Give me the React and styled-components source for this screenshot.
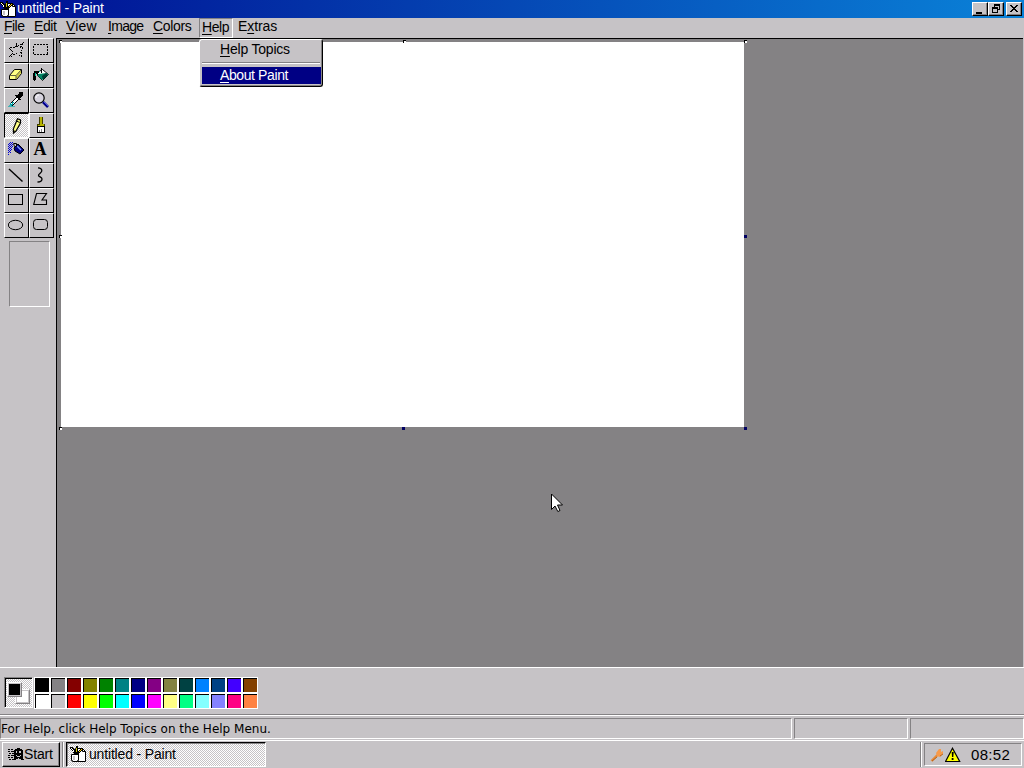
import React from "react";
import styled, { createGlobalStyle, css } from "styled-components";

const GlobalStyle = createGlobalStyle`
  * {
    box-sizing: border-box;
  }
  body {
    margin: 0;
    overflow: hidden;
    background: #c6c3c6;
    color: #000;
    font-family: "Liberation Sans", Arial, sans-serif;
    font-size: 14px;
  }
  svg {
    display: block;
    flex: none;
  }
`;

const dither = css`
  background: repeating-conic-gradient(#fff 0% 25%, #c6c3c6 0% 50%) 0 0 / 2px 2px;
`;

const sunken = css`
  border: 1px solid;
  border-color: #848284 #fff #fff #848284;
`;

const Screen = styled.div`
  position: relative;
  display: flex;
  flex-direction: column;
  width: 1024px;
  height: 768px;
  overflow: hidden;
  cursor: default;
`;

const TitleBar = styled.header`
  display: flex;
  align-items: center;
  height: 18px;
  padding: 0 2px 0 0;
  background: linear-gradient(to right, #000e92, #0a82d8);
  color: #fff;
`;

const Label = styled.span`
  white-space: pre;
  line-height: 16px;
  letter-spacing: ${p => p.spacing || 0}px;
`;

const Title = styled(Label)`
  flex: 1;
  padding: 0 0 2px 1px;
`;

const WindowButton = styled.button`
  display: flex;
  align-items: center;
  justify-content: center;
  width: 16px;
  height: 14px;
  margin: 0 0 0 ${p => p.gap || 0}px;
  padding: 0;
  background: #c6c3c6;
  border: 1px solid;
  border-color: #fff #000 #000 #fff;
  box-shadow: inset -1px -1px #848284;
`;

const MenuBar = styled.nav`
  display: flex;
  height: 20px;
`;

const MenuItem = styled.div`
  position: relative;
  width: ${p => p.width}px;
  height: 20px;
  padding-left: 4px;

  ${p =>
    p.open &&
    css`
      padding: 0 0 0 2px;
      border: 1px solid;
      border-color: #848284 #fff #fff #848284;
      margin-right: 1px;
    `}
`;

const Hot = styled.span`
  text-decoration: underline;
  text-underline-offset: 2px;
  text-decoration-thickness: 1px;
  text-decoration-skip-ink: none;
`;

const Menu = styled.div`
  position: absolute;
  z-index: 3;
  top: 20px;
  left: -1px;
  width: 124px;
  height: 48px;
  padding: 1px;
  background: #c6c3c6;
  border: 1px solid;
  border-color: #fff #000 #000 #fff;
  border-radius: 3px;
  box-shadow: inset -1px -1px #848284;
`;

const MenuRow = styled.div`
  width: 119px;
  height: ${p => (p.active ? 17 : 18)}px;
  padding: 0 0 0 18px;
  background: ${p => (p.active ? "#000084" : "transparent")};
  color: ${p => (p.active ? "#fff" : "#000")};
  margin-left: 1px;
`;

const MenuLine = styled.div`
  height: 2px;
  margin: 3px 1px;
  border-top: 1px solid #848284;
  border-bottom: 1px solid #fff;
`;

const Main = styled.main`
  display: flex;
  height: 629px;
`;

const Side = styled.aside`
  width: 56px;
  padding-left: 4px;
`;

const Tools = styled.div`
  display: grid;
  grid-template-columns: 25px 25px;
  grid-auto-rows: 25px;
`;

const Tool = styled.button`
  display: flex;
  padding: 3px;
  background: #c6c3c6;
  border: 1px solid;
  border-color: #fff #000 #000 #fff;

  ${p =>
    p.pressed &&
    css`
      ${dither}
      padding: 4px 2px 2px 4px;
      border-color: #000 #fff #fff #000;
    `}
`;

const Options = styled.div`
  ${sunken}
  width: 41px;
  height: 66px;
  margin: 3px 0 0 5px;
`;

const Workspace = styled.section`
  flex: 1;
  margin-right: 1px;
  padding: 3px 0 0 4px;
  background: #848284;
  border-left: 1px solid #000;
  border-top: 1px solid #000;
`;

const Canvas = styled.div`
  position: relative;
  width: 683px;
  height: 385px;
  background: #fff;
`;

const Handle = styled.i`
  position: absolute;
  left: ${p => p.x}px;
  top: ${p => p.y}px;
  width: 3px;
  height: 3px;
  background: ${p => (p.active ? "#000063" : "#fff")};
  ${p => !p.active && "box-shadow: inset 1px 1px #000;"}
`;

const ColorBar = styled.section`
  display: flex;
  height: 48px;
  padding: 9px 0 0 4px;
  border-top: 1px solid #fff;
  border-bottom: 1px solid #848284;
`;

const CurrentColors = styled.div`
  ${dither}
  position: relative;
  width: 29px;
  height: 31px;
  border: 1px solid;
  border-color: #848284 #fff #fff #848284;
  box-shadow: inset 1px 1px #000;
`;

const Chip = styled.div`
  position: absolute;
  left: ${p => p.x}px;
  top: ${p => p.y}px;
  width: 15px;
  height: 15px;
  background: ${p => p.color};
  border: 1px solid;
  border-color: #fff #848284 #848284 #fff;
  box-shadow: inset 0 0 0 1px #c6c3c6;
`;

const Palette = styled.div`
  display: grid;
  grid-template-columns: repeat(14, 16px);
  grid-auto-rows: 16px;
  margin-left: 1px;
`;

const Swatch = styled.div`
  background: ${p => p.color};
  border: 1px solid #fff;
  box-shadow: inset 1px 1px #000;
`;

const StatusBar = styled.footer`
  display: flex;
  gap: 2px;
  height: 25px;
  padding: 2px 0 1px;
  border-top: 1px solid #fff;
  font: 12px "DejaVu Sans", sans-serif;
`;

const StatusField = styled.div`
  ${sunken}
  width: ${p => p.width}px;
  padding-top: 1px;
  line-height: 18px;
`;

const TaskBar = styled.footer`
  display: flex;
  height: 28px;
  padding: 1px 1px 1px 2px;
  border-top: 1px solid #fff;
`;

const StartButton = styled.button`
  display: flex;
  width: 58px;
  height: 25px;
  padding: 3px 0 0 5px;
  background: #c6c3c6;
  border: 1px solid;
  border-color: #fff #000 #000 #fff;
  box-shadow: inset -1px -1px #848284;
  font: inherit;
  color: #000;
`;

const Divider = styled.div`
  width: 2px;
  height: 25px;
  margin-left: ${p => p.left}px;
  border-left: 1px solid #848284;
  border-right: 1px solid #fff;
`;

const TaskButton = styled.div`
  ${dither}
  display: flex;
  width: 200px;
  height: 25px;
  margin-left: 2px;
  padding: 3px 0 0 3px;
  border: 1px solid;
  border-color: #000 #fff #fff #000;
  box-shadow: inset 1px 1px #848284;
`;

const TaskLabel = styled(Label)`
  margin-left: 3px;
`;

const Tray = styled.div`
  ${sunken}
  display: flex;
  align-items: center;
  width: 98px;
  height: 23px;
  margin: 1px 0 0 2px;
  padding-left: 5px;
`;

const Clock = styled(Label)`
  margin-left: 10px;
  font-size: 15px;
`;

const Pointer = styled.div`
  position: absolute;
  left: 551px;
  top: 493px;
`;

const Icon = ({ w = 16, h = 16, smooth, children }) => (
  <svg
    width={w}
    height={h}
    viewBox={`0 0 ${w} ${h}`}
    shapeRendering={smooth ? "auto" : "crispEdges"}
    fill="none"
  >
    {children}
  </svg>
);

const PaintIcon = () => (
  <Icon smooth>
    <path d="M5.500 2.500h7l3 3v10h-10z" fill="#fff" stroke="#000" />
    <path d="M12.500 2.500v3h3" stroke="#000" />
    <path d="M1.500 8.500h7v6h-1v1h-5v-1h-1z" fill="#fff" stroke="#000" />
    <path d="M3 10h2v4H3z" fill="#c6c3c6" />
    <path d="M0 1h3v1h1v1h1v2h1v3H4V7H3V5H2V4H1V3H0z" fill="#000" />
    <path d="M1 2h1v1h1v1h1v2H3V4H2V3H1z" fill="#fff" />
    <path d="M6 0h2v8H6z" fill="#000" />
    <path d="M6 2h1v4H6z" fill="#c6c300" />
    <path d="M11 2h2v2h-1v1h-1v1h-1v1H9v2H7V7h1V5h1V4h1V3h1z" fill="#000" />
    <path d="M11 3h1v1h-1v1h-1v1H9V5h1V4h1z" fill="#ffcf00" />
  </Icon>
);

const StarIcon = () => (
  <Icon>
    <path
      d="M8.5 0.5v3l-1 2h-6v1l3 3v2l-3 3h2l4-3h1l5 3v-3l-1-2 2-3v-1h-2l2-4-5 3-1-1z"
      stroke="#000"
      strokeDasharray="2 1"
    />
  </Icon>
);

const SelectIcon = () => (
  <Icon>
    <rect x="0.5" y="2.5" width="14" height="10" stroke="#000" strokeDasharray="2 1" />
  </Icon>
);

const EraserIcon = () => (
  <Icon smooth>
    <path d="M6.500 2.500h7v4l-5 6h-7v-4z" fill="#ffff84" stroke="#000" />
    <path d="M8 9l5-6v3l-5 6z" fill="#c6c342" />
    <path d="M2 8.500h6V12M8 8.500l5-5.500" stroke="#636142" />
  </Icon>
);

const FillIcon = () => (
  <Icon smooth>
    <path d="M4.500 5.500l5-3 6 5-6 6-5-5z" fill="#fff" stroke="#000" />
    <path d="M5 7l9-1 1 2-6 5-4-4z" fill="#008663" />
    <path d="M9 9l4-3 2 2-5 5z" fill="#003c32" />
    <path d="M8 1h1v5H8z" fill="#000" />
    <path d="M1 4h5v2H4v1H3v6H2v1H1v-1H0V6h1z" fill="#000" />
    <path d="M2 6h1v3H2zM6 4h1v1H6z" fill="#00c39a" />
  </Icon>
);

const PickIcon = () => (
  <Icon>
    <path d="M11 0h4v4h-1v1h-1v1h-1v1h1v1h-2V7h-1V6H9V5H8V4H7V3h3V2h1z" fill="#000" />
    <path d="M8.5 5.5l-6 6v2h2l6-6" fill="#fff" stroke="#000" />
    <path d="M2 11h1v1h2v1H4v1H2zM4 10h2v1H5v1H4z" fill="#00a2a5" />
    <path d="M0 14h7v1H0zM1 13h2v1H1z" fill="#42b2b5" />
  </Icon>
);

const ZoomIcon = () => (
  <Icon smooth>
    <circle cx="6" cy="6" r="5.200" stroke="#000" strokeWidth="1.200" fill="#d6d3de" />
    <path d="M3 6c0-2 1-3 3-3" stroke="#fff" />
    <path d="M10 10l5 5" stroke="#000084" strokeWidth="2.600" />
    <path d="M11 10l4 4" stroke="#6363ff" strokeWidth=".8" />
  </Icon>
);

const PencilIcon = () => (
  <Icon smooth>
    <path d="M8.500 .7l3 1.300v3l-4.500 8-2.500 2-.2-4z" fill="#ffff84" stroke="#000" strokeWidth="1.200" />
    <path d="M7.500 3l3.200 1.500" stroke="#000" />
    <path d="M4 11.500l2 1.500-2 2.500z" fill="#000" />
  </Icon>
);

const BrushIcon = () => (
  <Icon>
    <path d="M6 0h4v7h2v3H4V7h2z" fill="#424100" />
    <path d="M7 0h2v7h2v2H5V8h2z" fill="#b5b200" />
    <path d="M4 9h8v7H4z" fill="#000" />
    <path d="M5 10h6v5H5z" fill="#fff" />
    <path d="M6 13h1v2H6zM8 12h1v3H8z" fill="#848284" />
  </Icon>
);

const SprayIcon = () => (
  <Icon smooth>
    <path d="M6 6l4-4 6 6-4 4-5-3z" fill="#000084" stroke="#000" />
    <path d="M9 4l4 4" stroke="#7b9aff" strokeWidth="1.500" />
    <path d="M5.500 1.500h3v3h-2z" fill="#c6c3c6" stroke="#000" />
    <path
      d="M2 0h1v1H2zM4 0h1v1H4zM1 1h1v1H1zM3 1h1v1H3zM0 2h1v1H0zM2 2h1v1H2zM4 2h1v1H4zM1 3h1v1H1zM3 3h1v1H3zM0 4h1v1H0zM2 4h1v1H2zM4 4h1v1H4zM1 5h1v1H1zM3 5h1v1H3zM0 6h1v1H0zM2 6h1v1H2zM1 7h1v1H1zM3 7h1v1H3zM0 8h1v1H0zM2 8h1v1H2zM1 9h1v1H1zM0 10h1v1H0zM2 10h1v1H2zM0 12h1v1H0z"
      fill="#0000d6"
    />
  </Icon>
);

const Letter = styled.span`
  width: 14px;
  font: bold 18px/15px "Liberation Serif", serif;
  text-align: center;
  color: #000;
`;

const LineIcon = () => (
  <Icon smooth>
    <path d="M1 2l13.500 12.500" stroke="#000" strokeWidth="1.400" />
  </Icon>
);

const CurveIcon = () => (
  <Icon smooth>
    <path d="M5 .8c2.500 0 4 1.200 3.800 3.200S5 7 5.500 8.500 9 10 9 12s-2 3-4.500 3" stroke="#000" strokeWidth="1.300" />
  </Icon>
);

const RectIcon = () => (
  <Icon>
    <rect x="0.5" y="2.5" width="14" height="10" stroke="#000" />
  </Icon>
);

const PolygonIcon = () => (
  <Icon smooth>
    <path d="M3.500 1.500h10l-4.500 6.500h4.500v4.500H.7z" stroke="#000" strokeWidth="1.100" />
  </Icon>
);

const EllipseIcon = () => (
  <Icon smooth>
    <ellipse cx="7.5" cy="8" rx="7.2" ry="4.7" stroke="#000" />
  </Icon>
);

const RoundRectIcon = () => (
  <Icon smooth>
    <rect x="0.5" y="2.5" width="14" height="10" rx="3" stroke="#000" />
  </Icon>
);

const tools = [
  StarIcon,
  SelectIcon,
  EraserIcon,
  FillIcon,
  PickIcon,
  ZoomIcon,
  PencilIcon,
  BrushIcon,
  SprayIcon,
  () => <Letter>A</Letter>,
  LineIcon,
  CurveIcon,
  RectIcon,
  PolygonIcon,
  EllipseIcon,
  RoundRectIcon
];

const colors = [
  "#000000", "#848284", "#840000", "#848200", "#008200", "#008284", "#000084",
  "#840084", "#848242", "#004142", "#0082ff", "#004184", "#4200ff", "#844100",
  "#ffffff", "#c6c3c6", "#ff0000", "#ffff00", "#00ff00", "#00ffff", "#0000ff",
  "#ff00ff", "#ffff84", "#00ff84", "#84ffff", "#8482ff", "#ff0084", "#ff8242"
];

const menus = [
  { pre: "", hot: "F", rest: "ile", width: 30, spacing: -0.55 },
  { pre: "", hot: "E", rest: "dit", width: 32, spacing: -0.4 },
  { pre: "", hot: "V", rest: "iew", width: 42, spacing: 0.2 },
  { pre: "", hot: "I", rest: "mage", width: 45, spacing: -0.7 },
  { pre: "", hot: "C", rest: "olors", width: 50, spacing: -0.35 },
  { pre: "", hot: "H", rest: "elp", width: 34, spacing: -0.4, open: true },
  { pre: "E", hot: "x", rest: "tras", width: 50, spacing: -0.1 }
];

const handles = [
  [-2, -2], [342, -2], [683, -2], [-2, 193],
  [683, 193, true], [-2, 385], [341, 385, true], [683, 385, true]
];

const HelpMenu = () => (
  <Menu>
    <MenuRow>
      <Label spacing={-0.2}>
        <Hot>H</Hot>elp Topics
      </Label>
    </MenuRow>
    <MenuLine />
    <MenuRow active>
      <Label spacing={-0.4}>
        <Hot>A</Hot>bout Paint
      </Label>
    </MenuRow>
  </Menu>
);

const App = () => (
  <>
    <GlobalStyle />
    <Screen>
      <TitleBar>
        <PaintIcon />
        <Title spacing={-0.17}>untitled - Paint</Title>
        <WindowButton>
          <Icon w={12} h={10}>
            <path d="M2 8h6v2H2z" fill="#000" />
          </Icon>
        </WindowButton>
        <WindowButton>
          <Icon w={12} h={10}>
            <path d="M4 0h6v6H8V5h1V2H5v1H4zM2 3h6v6H2zM3 5v3h4V5z" fill="#000" fillRule="evenodd" />
          </Icon>
        </WindowButton>
        <WindowButton gap={2}>
          <Icon w={12} h={10}>
            <path
              d="M2 1h2v1h1v1h2V2h1V1h2v1H9v1H8v1H7v1h1v1h1v1h1v1H8V7H7V6H5v1H4v1H2V7h1V6h1V5h1V4H4V3H3V2H2z"
              fill="#000"
            />
          </Icon>
        </WindowButton>
      </TitleBar>

      <MenuBar>
        {menus.map(m => (
          <MenuItem key={m.hot} width={m.width} open={m.open}>
            <Label spacing={m.spacing}>
              {m.pre}
              <Hot>{m.hot}</Hot>
              {m.rest}
            </Label>
            {m.open && <HelpMenu />}
          </MenuItem>
        ))}
      </MenuBar>

      <Main>
        <Side>
          <Tools>
            {tools.map((ToolIcon, i) => (
              <Tool key={i} pressed={i === 6}>
                <ToolIcon />
              </Tool>
            ))}
          </Tools>
          <Options />
        </Side>
        <Workspace>
          <Canvas>
            {handles.map(([x, y, active]) => (
              <Handle key={`${x},${y}`} x={x} y={y} active={active} />
            ))}
          </Canvas>
        </Workspace>
      </Main>

      <ColorBar>
        <CurrentColors>
          <Chip x={10} y={11} color="#fff" />
          <Chip x={2} y={4} color="#000" />
        </CurrentColors>
        <Palette>
          {colors.map(c => (
            <Swatch key={c} color={c} />
          ))}
        </Palette>
      </ColorBar>

      <StatusBar>
        <StatusField width={792}>For Help, click Help Topics on the Help Menu.</StatusField>
        <StatusField width={114}>{""}</StatusField>
        <StatusField width={114}>{""}</StatusField>
      </StatusBar>

      <TaskBar>
        <StartButton>
          <Icon>
            <path d="M6 4h1V3h2V2h3v1h2v1h1v9h1v1h-3v-1h-2v-1h-1v1H8v1H6z" fill="#000" />
            <path
              d="M0 3h2v1H0zM3 3h2v1H3zM0 5h2v1H0zM3 5h3v1H3zM1 7h2v1H1zM4 7h2v1H4zM0 9h2v1H0zM3 9h3v1H3zM0 11h2v1H0zM3 11h2v1H3zM1 13h2v1H1zM4 13h2v1H4z"
              fill="#000"
            />
            <path d="M8 5h1v2H8zM11 5h2v2h-2zM8 9h1v1H8zM9 10h3v1H9zM12 9h1v1h-1z" fill="#c6c3c6" />
          </Icon>
          <Label spacing={-0.15}>Start</Label>
        </StartButton>
        <Divider left={2} />
        <TaskButton>
          <PaintIcon />
          <TaskLabel spacing={-0.17}>untitled - Paint</TaskLabel>
        </TaskButton>
        <Divider left={654} />
        <Tray>
          <Icon w={15} smooth>
            <path d="M1.500 14l6-6" stroke="#e78a39" strokeWidth="2.400" />
            <path d="M6 6l3-4h2v3l2-1v3l-3 3-3-1z" fill="#f79a4a" />
            <path d="M2 14l5-4M10 9l3-2" stroke="#a55a18" strokeWidth=".8" />
          </Icon>
          <Icon smooth>
            <path d="M7.500 1.200l7.200 13.300H.5z" fill="#ff0" stroke="#000" strokeWidth="1.200" />
            <path d="M6.700 5h2l-.4 5H7zM6.700 11h1.800v2H6.700z" fill="#000" />
          </Icon>
          <Clock spacing={0.3}>08:52</Clock>
        </Tray>
      </TaskBar>

      <Pointer>
        <Icon w={13} h={20} smooth>
          <path d="M.5 1v15.500l3.500-3.500 2.800 5.500 2.200-1-2.500-5.500h5z" fill="#fff" stroke="#000" />
        </Icon>
      </Pointer>
    </Screen>
  </>
);

export default App;
